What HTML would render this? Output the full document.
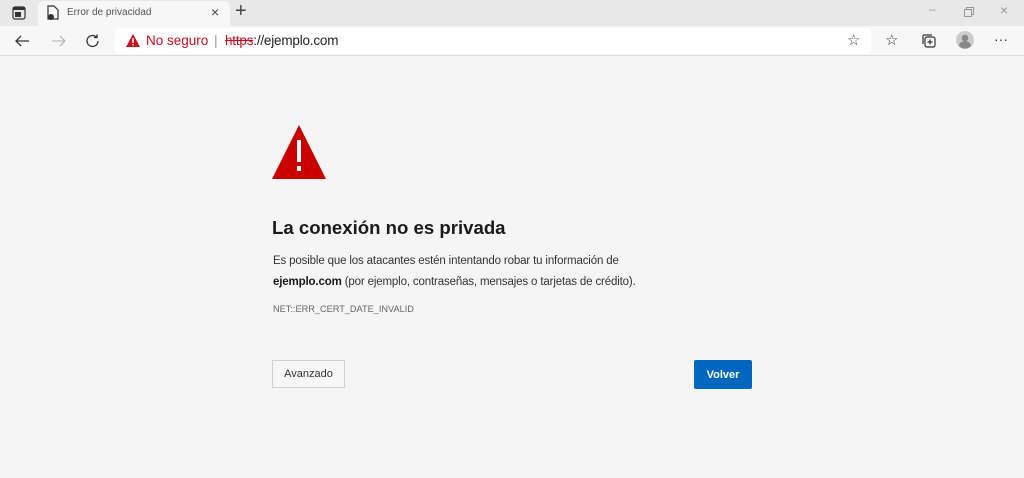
<!DOCTYPE html>
<html><head><meta charset="utf-8"><style>
*{margin:0;padding:0;box-sizing:border-box}
body{width:1024px;height:478px;background:#f5f5f5;font-family:"Liberation Sans",sans-serif;position:relative;overflow:hidden}
.abs{position:absolute;white-space:nowrap}
#tabs{left:0;top:0;width:1024px;height:26px;background:#e8e8e8}
#tab{left:38px;top:1px;width:192px;height:26px;background:#f7f7f7;border-radius:6px 6px 0 0}
#bar{left:0;top:26px;width:1024px;height:30px;background:#f7f7f7;border-bottom:1px solid #dcdcdc}
#addr{left:115px;top:28px;width:756px;height:26px;background:#fff;border-radius:4px}
.t{font-size:11.5px;letter-spacing:-0.15px}
</style></head><body>
<div id="tabs" class="abs"></div>
<div id="tab" class="abs"></div>
<svg class="abs" style="left:12px;top:6px" width="14" height="14"><rect x="1" y="1" width="12" height="12" rx="2" fill="none" stroke="#333" stroke-width="1.2"/><rect x="1" y="1" width="12" height="3" fill="#333"/><rect x="3" y="6" width="6" height="5" fill="#333"/></svg>
<svg class="abs" style="left:46px;top:5px" width="14" height="16"><path d="M2 1h6l4 4v9H2z" fill="none" stroke="#333" stroke-width="1.2"/><circle cx="5" cy="12" r="3" fill="#333"/></svg>
<div class="abs" style="left:67px;top:7px;font-size:10px;color:#555">Error de privacidad</div>
<div class="abs" style="left:211px;top:4px;font-size:14px;color:#444">×</div>
<div class="abs" style="left:235px;top:0px;font-size:20px;color:#444;font-weight:300">+</div>
<div class="abs" style="left:929px;top:2px;font-size:12px;color:#999">–</div>
<svg class="abs" style="left:964px;top:7px" width="10" height="10"><rect x="0.5" y="2.5" width="7" height="7" fill="none" stroke="#999"/><path d="M2.5 2.5v-2h7v7h-2" fill="none" stroke="#999"/></svg>
<div class="abs" style="left:1000px;top:2px;font-size:14px;color:#999">×</div>
<div id="bar" class="abs"></div>
<div id="addr" class="abs"></div>
<svg class="abs" style="left:14px;top:33px" width="16" height="16"><path d="M15 8H2M7 3L2 8l5 5" fill="none" stroke="#333" stroke-width="1.3"/></svg>
<svg class="abs" style="left:51px;top:33px" width="16" height="16"><path d="M1 8h13M9 3l5 5-5 5" fill="none" stroke="#bbb" stroke-width="1.3"/></svg>
<svg class="abs" style="left:85px;top:33px" width="16" height="16"><path d="M13 8a5.5 5.5 0 1 1-1.6-3.9M12 1.5v3h-3" fill="none" stroke="#333" stroke-width="1.3"/></svg>
<svg class="abs" style="left:126px;top:34px" width="14" height="13"><path d="M7 0L14 13H0z" fill="#c50f1f"/><rect x="6.3" y="4" width="1.4" height="5" fill="#fff"/><rect x="6.3" y="10" width="1.4" height="1.4" fill="#fff"/></svg>
<div class="abs" style="left:146px;top:33px;font-size:13.5px;color:#c50f1f">No seguro</div>
<div class="abs" style="left:214px;top:32px;font-size:14px;color:#999">|</div>
<div class="abs" style="left:225px;top:33px;font-size:13.5px;color:#222;letter-spacing:-0.2px"><span style="color:#c50f1f;text-decoration:line-through">https</span>://ejemplo.com</div>
<div class="abs" style="left:847px;top:31px;font-size:15px;color:#444">☆</div>
<div class="abs" style="left:885px;top:31px;font-size:15px;color:#333">☆</div>
<svg class="abs" style="left:921px;top:33px" width="16" height="16"><rect x="4" y="4" width="10" height="10" rx="2" fill="none" stroke="#333" stroke-width="1.2"/><path d="M2 11V3a1 1 0 0 1 1-1h8" fill="none" stroke="#333" stroke-width="1.2"/><path d="M9 6.5v5M6.5 9h5" stroke="#333" stroke-width="1.2"/></svg>
<svg class="abs" style="left:956px;top:31px" width="18" height="18"><circle cx="9" cy="9" r="9" fill="#ccc"/><circle cx="9" cy="7" r="3.3" fill="#888"/><path d="M3 15a6 5 0 0 1 12 0a8.5 8.5 0 0 1-12 0z" fill="#888"/></svg>
<div class="abs" style="left:994px;top:31px;font-size:14px;color:#333">···</div>

<svg class="abs" style="left:272px;top:125px" width="54" height="54"><path d="M27 0L54 54H0z" fill="#c80000"/><rect x="25" y="15" width="4" height="22" fill="#fff"/><rect x="25" y="41" width="4" height="5" fill="#fff"/></svg>
<div class="abs" style="left:272px;top:217px;font-size:18.6px;font-weight:bold;color:#1a1a1a">La conexión no es privada</div>
<div class="abs t" style="left:273px;top:255px;color:#333">Es posible que los atacantes estén intentando robar tu información de</div>
<div class="abs t" style="left:273px;top:276px;color:#333"><b style="color:#1a1a1a">ejemplo.com</b> (por ejemplo, contraseñas, mensajes o tarjetas de crédito).</div>
<div class="abs" style="left:273px;top:304px;font-size:9.2px;color:#666">NET::ERR_CERT_DATE_INVALID</div>
<div class="abs" style="left:272px;top:360px;width:73px;height:28px;border:1px solid #d0d0d0;background:#f7f7f7;font-size:11px;color:#333;text-align:center;line-height:27px">Avanzado</div>
<div class="abs" style="left:694px;top:360px;width:58px;height:29px;background:#0067c0;border-radius:2px;font-size:11px;font-weight:bold;color:#fff;text-align:center;line-height:30px">Volver</div>
</body></html>
